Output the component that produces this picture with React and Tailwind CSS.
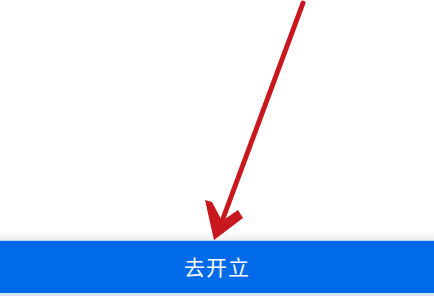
const App = () => {
  return (
    <div className="relative w-full h-[296px] bg-white flex flex-col overflow-hidden">
      <div className="flex-1" />
      <div className="h-[9px] bg-gradient-to-b from-white to-[#eeeeee]" />
      <div className="h-[1px] bg-[#bcd3ee]" />
      <div className="h-[52px] bg-[#006ae8] flex items-center justify-center">
        <span className="text-[21px] text-white tracking-[1px]" style={{ fontFamily: '"Noto Sans CJK SC", "Noto Sans", sans-serif' }}>
          去开立
        </span>
      </div>
      <div className="h-[3px] bg-[#d8e4f3]" />

      <svg className="absolute inset-0 pointer-events-none" width="434" height="296" viewBox="0 0 434 296">
        <line x1="303" y1="3" x2="221" y2="224" stroke="#c8171d" strokeWidth="5" strokeLinecap="round" />
        <polygon points="214,240 205,200 212,202 222,221 238,210 243,218" fill="#c8171d" />
      </svg>
    </div>
  );
};

export default App;
